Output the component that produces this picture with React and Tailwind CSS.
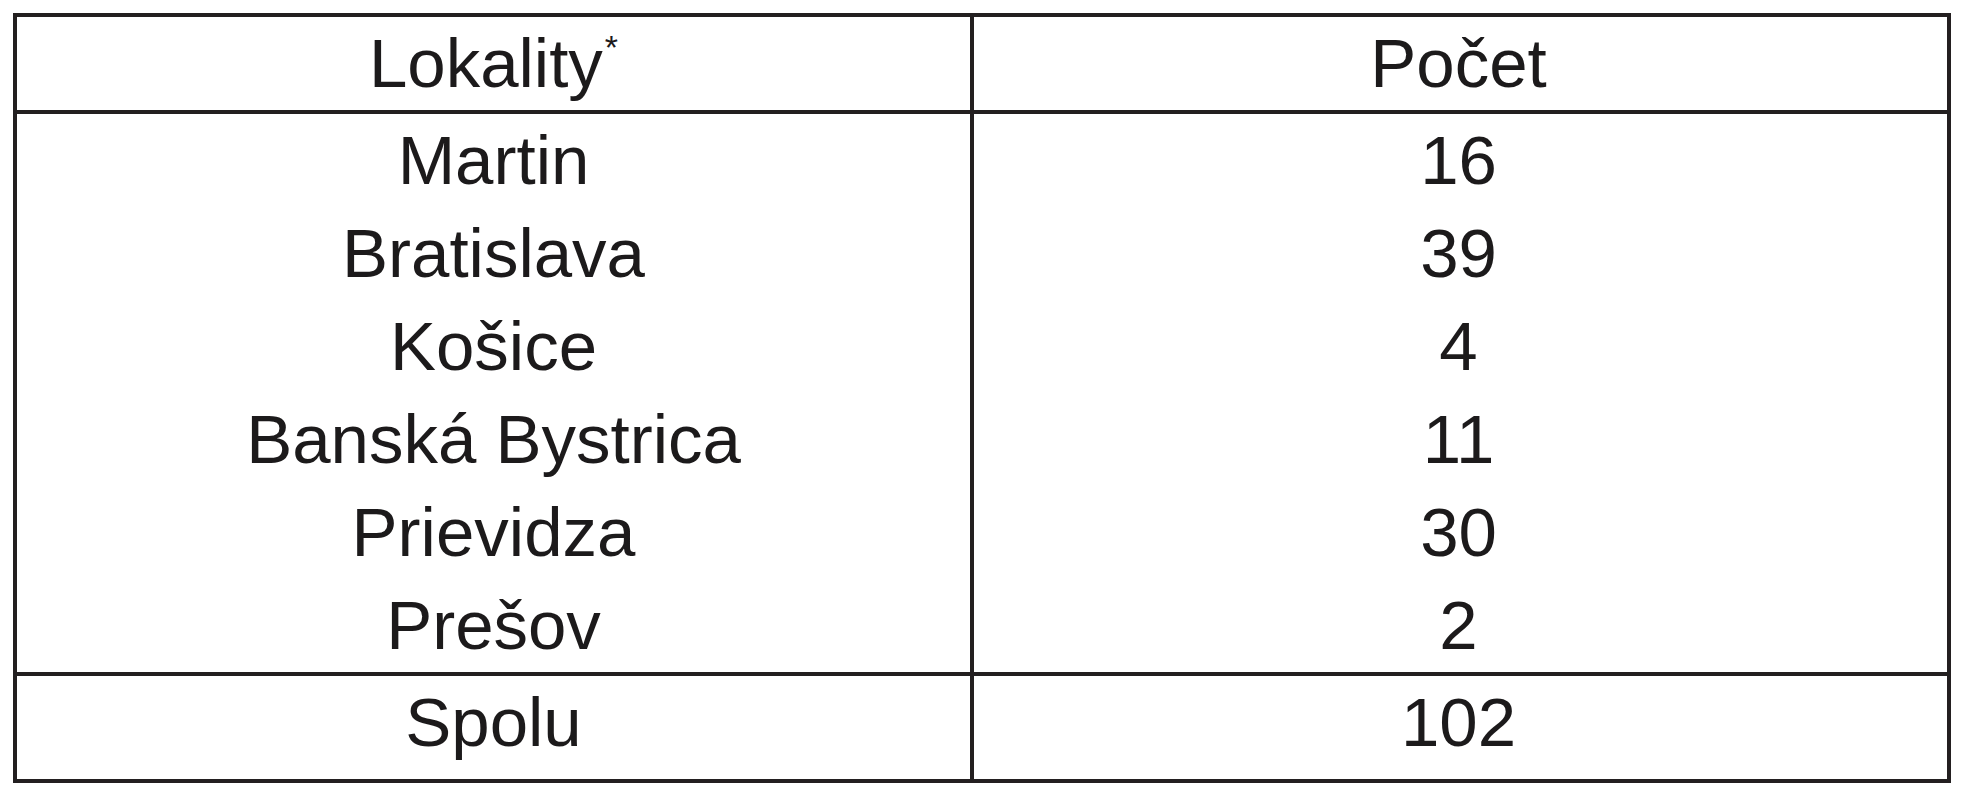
const rows = [
  ['Martin', '16'],
  ['Bratislava', '39'],
  ['Košice', '4'],
  ['Banská Bystrica', '11'],
  ['Prievidza', '30'],
  ['Prešov', '2'],
];

const cell = 'flex justify-center items-start h-[93px] leading-[93px]';

export default function App() {
  return (
    <div className="w-[1964px] h-[800px] bg-white pt-[13px] pl-[13px] font-['Liberation_Sans',Arial,sans-serif] text-[69px] text-[#1c1a1b]">
      <div className="w-[1938px] border-4 border-[#231f20]">
        <div className="grid grid-cols-[957px_969px] border-b-4 border-[#231f20]">
          <div className={`${cell} border-r-4 border-[#231f20]`}>
            <span>
              Lokality<span className="relative -top-[28px] ml-[2px] text-[34px] align-baseline">*</span>
            </span>
          </div>
          <div className={cell}>Počet</div>
        </div>
        <div className="border-b-4 border-[#231f20]">
          {rows.map(([name, count]) => (
            <div key={name} className="grid grid-cols-[957px_969px]">
              <div className={`${cell} border-r-4 border-[#231f20]`}>{name}</div>
              <div className={cell}>{count}</div>
            </div>
          ))}
        </div>
        <div className="grid grid-cols-[957px_969px]">
          <div className="flex justify-center h-[103px] leading-[93px] border-r-4 border-[#231f20]">Spolu</div>
          <div className="flex justify-center h-[103px] leading-[93px]">102</div>
        </div>
      </div>
    </div>
  );
}
